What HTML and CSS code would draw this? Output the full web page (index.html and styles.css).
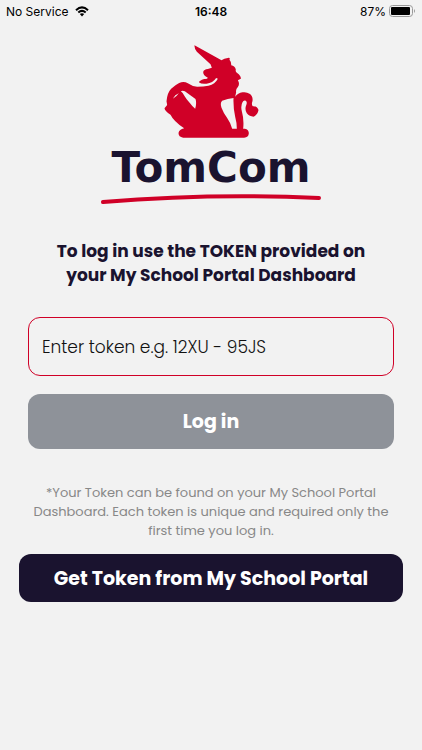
FILE: index.html
```html
<!DOCTYPE html>
<html lang="en">

<head>
    <meta charset="UTF-8">
    <meta name="viewport" content="width=device-width, initial-scale=1.0">
    <title>TomCom - Log in</title>
    <link rel="stylesheet" href="styles.css">
</head>

<body>
    <!-- Status bar -->
    <div class="status-bar">
        <div class="status-left">
            <span>No Service</span>
            <svg class="wifi-icon" viewBox="0 0 14 11" aria-hidden="true">
                <path d="M1 4.2Q7-1.4 13 4.2" />
                <path d="M3.3 6.6Q7 3.2 10.7 6.6" />
                <path class="wifi-dot" d="M4.8 8.1Q7 6.2 9.2 8.1L7 10.6Z" />
            </svg>
        </div>
        <div class="status-time">16:48</div>
        <div class="status-right">
            <span>87%</span>
            <svg class="battery-icon" viewBox="0 0 27 12" aria-hidden="true">
                <rect x="0.5" y="0.5" width="23" height="11" rx="3" fill="none" stroke="#999" />
                <rect x="2" y="2" width="19" height="8" rx="1" fill="#000" />
                <path d="M25 4Q27 6 25 8Z" fill="#999" />
            </svg>
        </div>
    </div>

    <main class="login">
        <!-- Logo -->
        <div class="logo">
            <svg class="logo-unicorn" viewBox="27 22 284 279" aria-hidden="true">
                <path fill="#d00027" fill-rule="evenodd" d="M118 23 L199 68 Q207 62 218 61 Q226 59 223 66 Q229 73 228 83 Q240 85 242 96 Q240 102 246 106 Q258 115 257 123 L248 128 Q255 139 248 148 Q241 155 243 164 L240 177 Q248 166 262 164 Q274 162 283 168 Q294 175 292 190 Q288 200 293 206 Q306 205 310 217 Q308 231 295 237 Q283 237 275 227 Q268 215 273 203 Q277 193 272 189 Q265 186 262 194 Q256 204 260 221 Q267 246 264 273 H269 Q281 275 281 287 Q280 300 267 300 H84 Q70 298 70 286 Q72 275 87 272 Q55 250 46 231 Q29 221 28 212 L36 202 L34 191 Q36 165 48 153 Q60 142 72 136 Q86 130 98 137 Q110 146 126 147 Q145 147 160 144 Q180 139 188 123 L183 121 Q173 136 154 138 Q139 140 131 134 Q132 129 147 124 Q157 125 158 120 Q144 114 144 103 Q146 95 158 94 L170 90 L166 80 L125 42 Q117 32 118 23 Z M77 161 Q82 157 89 161 L121 184 Q125 196 120 213 Q112 207 104 196 Q93 184 88 175 Q84 166 77 161 Z M53 183 Q59 171 71 167 Q67 174 53 183 Z M235 181 Q217 183 201 189 Q194 195 199 210 Q205 226 216 241 Q226 255 231 273 H245 Q245 255 240 237 Q234 212 235 181 Z" />
            </svg>
            <div class="logo-name">TomCom</div>
            <svg class="logo-line" viewBox="0 0 222 13" aria-hidden="true">
                <path d="M3 9Q111 0 219 5" />
            </svg>
        </div>

        <h1>To log in use the TOKEN provided on your My School Portal Dashboard</h1>

        <!-- Token form -->
        <form class="token-form">
            <input type="text" name="token" aria-label="Token" placeholder="Enter token e.g. 12XU - 95JS">
            <button type="submit">Log in</button>
        </form>

        <p class="note">*Your Token can be found on your My School Portal Dashboard. Each token is unique and required only the first time you log in.</p>

        <button type="button" class="portal-button">Get Token from My School Portal</button>
    </main>
</body>

</html>
```
FILE: styles.css
```css
body {
    background-color: #f2f2f2;
    font-family: Poppins, Inter, sans-serif;
    margin: 0;
    color: #1a132f;
}

.status-bar {
    display: grid;
    grid-template-columns: 1fr auto 1fr;
    align-items: center;
    height: 22px;
    padding: 0 6px;
    color: #000;
    font-family: Inter, sans-serif;
    font-size: 12px;
}

.status-left,
.status-right {
    display: flex;
    align-items: center;
    gap: 6px;
}

.status-right {
    justify-content: flex-end;
    gap: 3px;
}

.status-time {
    font-weight: 600;
}

.wifi-icon {
    width: 14px;
    height: 11px;
    fill: none;
    stroke: #000;
    stroke-width: 2;
}

.wifi-icon .wifi-dot {
    fill: #000;
    stroke: none;
}

.battery-icon {
    width: 27px;
    height: 12px;
}

.login {
    padding: 23px 19px;
    text-align: center;
}

.logo {
    display: flex;
    flex-direction: column;
    align-items: center;
}

.logo-unicorn {
    width: 95px;
    height: 93px;
}

.logo-name {
    font-family: "DejaVu Sans", sans-serif;
    font-size: 42px;
    font-weight: bold;
    line-height: 50px;
    margin-top: 5px;
}

.logo-line {
    width: 222px;
    height: 13px;
    fill: none;
    stroke: #d00027;
    stroke-width: 4;
    stroke-linecap: round;
}

h1 {
    font-size: 17px;
    font-weight: 700;
    line-height: 24px;
    max-width: 330px;
    margin: 33px auto 30px;
}

.token-form {
    display: flex;
    flex-direction: column;
    gap: 18px;
    margin: 0 9px;
}

.token-form input {
    box-sizing: border-box;
    width: 100%;
    height: 59px;
    padding: 0 13px;
    border: 1px solid #d00027;
    border-radius: 12px;
    background: transparent;
    font-family: inherit;
    font-size: 17px;
    font-weight: 300;
}

.token-form input::placeholder {
    color: #111;
    opacity: 1;
}

button {
    border: none;
    border-radius: 12px;
    color: white;
    font-family: inherit;
    font-size: 19px;
    font-weight: 700;
    cursor: pointer;
}

.token-form button {
    height: 55px;
    background-color: #8e9299;
}

.note {
    margin: 34px 9px 14px;
    color: #888;
    font-size: 13px;
    font-weight: 400;
    line-height: 19px;
}

.portal-button {
    width: 100%;
    height: 48px;
    background-color: #1a132f;
}
```
